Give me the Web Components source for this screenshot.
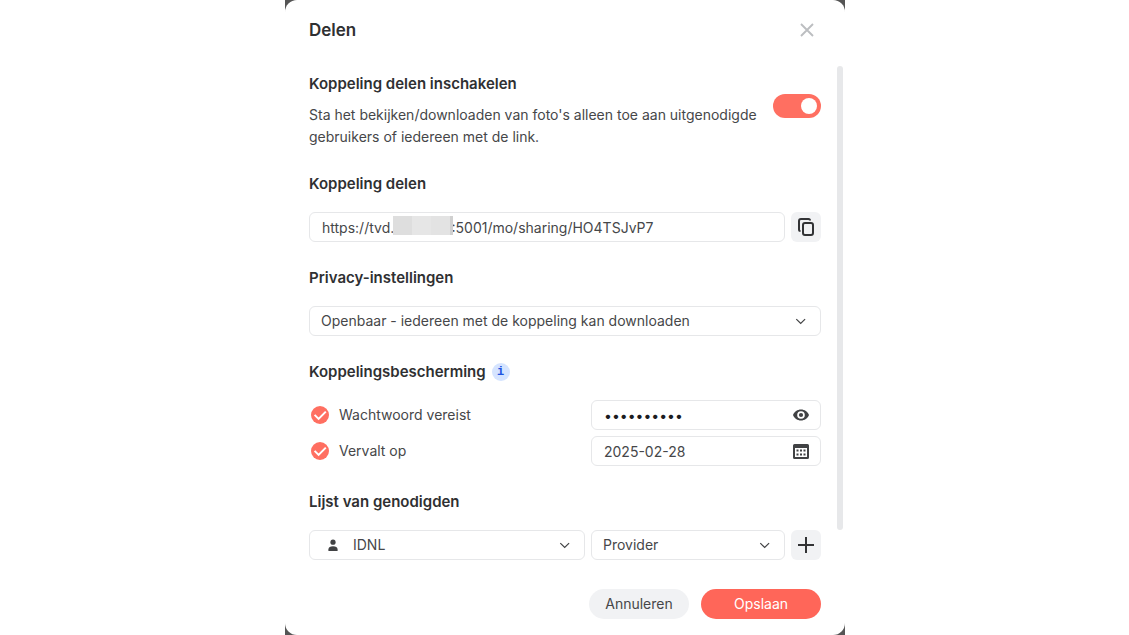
<!DOCTYPE html>
<html lang="nl">
<head>
<meta charset="utf-8">
<meta name="viewport" content="width=device-width, initial-scale=1">
<title>Delen</title>
<style>
  body { margin: 0; background: #fff; font: 400 14px/22px Inter, "Noto Sans", sans-serif; color: #464749; }
</style>
</head>
<body>
<share-page></share-page>

<script>
const define = (name, html, setup) => customElements.define(name, class extends HTMLElement {
  connectedCallback() {
    if (this.shadowRoot) return;
    const t = document.createElement('template');
    t.innerHTML = html;
    this.attachShadow({ mode: 'open' }).append(t.content.cloneNode(true));
    if (setup) setup(this, this.shadowRoot);
  }
});

/* Section heading with its content below */
define('form-section', `
<style>
  :host { display: block; }
  header { display: flex; align-items: center; gap: 6px; margin-bottom: 18px; }
  h2 { margin: 0; font-size: 15px; line-height: 20px; font-weight: 600; color: #2f3032; }
</style>
<section><header><h2></h2><slot name="hint"></slot></header><slot></slot></section>`,
(host, root) => { root.querySelector('h2').textContent = host.getAttribute('heading'); });

define('info-hint', `
<style>
  :host { display: block; height: 18px; }
  button { display: block; box-sizing: border-box; width: 18px; height: 18px; padding: 1px 0 0; border: 0; border-radius: 50%;
    background: #d5e4ff; color: #1f55e0; font: bold 12px/17px "Liberation Mono", monospace; }
</style>
<button type="button" aria-label="Informatie">i</button>`);

define('toggle-switch', `
<style>
  :host { display: block; }
  input { appearance: none; display: flex; justify-content: flex-end; box-sizing: border-box; width: 48px; height: 24px;
    margin: 0; padding: 4px; border-radius: 12px; background: #ff6f61; }
  input::before { content: ""; width: 16px; height: 16px; border-radius: 50%; background: #fff; }
  input:not(:checked) { justify-content: flex-start; background: #c6c8cc; }
</style>
<input type="checkbox" role="switch" checked aria-label="Koppeling delen inschakelen">`);

define('check-option', `
<style>
  :host { display: block; }
  label { display: flex; align-items: center; gap: 10px; padding-left: 2px; }
  .box { display: grid; width: 18px; height: 18px; }
  .box > * { grid-area: 1 / 1; }
  input { appearance: none; width: 18px; height: 18px; margin: 0; border-radius: 50%; border: 1px solid #c6c8cc; }
  input:checked { background: #ff6f61; border: 0; }
  svg { visibility: hidden; pointer-events: none; }
  input:checked + svg { visibility: visible; }
</style>
<label><span class="box"><input type="checkbox" checked>
<svg width="18" height="18" viewBox="0 0 18 18" fill="none" stroke="#fff" stroke-width="2"><path d="M3.600 8.900l4 4 7.200-7.300"/></svg></span><slot></slot></label>`);

/* Bordered text box with an optional trailing icon */
define('text-field', `
<style>
  :host { display: block; }
  .field { display: flex; align-items: center; box-sizing: border-box; height: 30px; position: relative;
    padding: 0 11px 0 12px; border: 1px solid #e6e7e9; border-radius: 6px; background: #fff; }
  input { flex: 1; min-width: 0; height: 28px; padding: 1px 0 0; border: 0; outline: 0; background: none;
    box-sizing: border-box; color: inherit; font: inherit; }
  input[type=password] { color: #1c1d1f; }
</style>
<div class="field"><input><slot></slot></div>`,
(host, root) => {
  const input = root.querySelector('input');
  input.type = host.getAttribute('type') || 'text';
  input.value = host.getAttribute('value');
  input.setAttribute('aria-label', host.getAttribute('label'));
});

define('redacted-block', `
<style>
  :host { display: block; position: absolute; left: 83px; top: 3px; width: 60px; height: 19px;
    background: linear-gradient(90deg, #dedede 19px, #e6e6e6 19px 38px, #e3e3e3 38px 57px, #d0d0d0 57px); }
</style>`);

define('select-field', `
<style>
  :host { display: block; min-width: 0; }
  .field { display: grid; grid-template-columns: 1fr auto; align-items: center; }
  select { grid-area: 1 / 1 / 2 / 3; appearance: none; box-sizing: border-box; width: 100%; height: 30px; margin: 0;
    padding: 0 40px 0 11px; border: 1px solid #e6e7e9; border-radius: 6px; background: #fff; color: inherit; font: inherit; }
  :host([icon]) select { padding-left: 43px; }
  svg { pointer-events: none; z-index: 1; }
  .chevron { grid-area: 1 / 2; margin-right: 14px; }
  .person { grid-area: 1 / 1; margin-left: 18px; display: none; }
  :host([icon]) .person { display: block; }
</style>
<div class="field"><select><option></option></select>
<svg class="person" width="12" height="12" viewBox="0 0 12 12" fill="#414244"><circle cx="6" cy="3.200" r="2.600"/><path d="M1.400 12v-1.500C1.400 8.200 3.300 7.200 6 7.200s4.600 1 4.600 3.300V12z"/></svg>
<svg class="chevron" width="12" height="12" viewBox="0 0 12 12" fill="none" stroke="#414244" stroke-width="1.200"><path d="M1.300 4.100L5.700 8.500l4.400-4.400"/></svg></div>`,
(host, root) => {
  root.querySelector('option').textContent = host.getAttribute('value');
  root.querySelector('select').setAttribute('aria-label', host.getAttribute('label'));
});

define('icon-button', `
<style>
  :host { display: block; }
  button { display: grid; place-items: center; width: 30px; height: 30px; padding: 0; border: 0; border-radius: 6px;
    background: #f1f2f4; color: #323335; }
  :host([plain]) button { width: 16px; height: 28px; background: none; color: #414244; }
  :host([close]) button { width: 28px; height: 28px; background: none; color: #bcbec1; }
</style>
<button type="button"><slot></slot></button>`,
(host, root) => { root.querySelector('button').setAttribute('aria-label', host.getAttribute('label')); });

define('pill-button', `
<style>
  :host { display: block; }
  button { display: block; width: 100px; height: 30px; padding: 0; border: 0; border-radius: 15px;
    background: #f1f2f4; color: inherit; font: inherit; }
  :host([primary]) button { width: 120px; background: #ff6659; color: #fff; }
</style>
<button type="button"><slot></slot></button>`);

define('share-dialog', `
<style>
  :host { display: block; background: #555; }
  .dialog { background: #fff; border-radius: 12px; }
  .top { display: flex; justify-content: space-between; align-items: center; padding: 16px 24px 22px; }
  h1 { margin: 0; font-size: 17px; line-height: 24px; font-weight: 600; color: #2f3032; }
  .body { display: grid; grid-template-columns: 1fr 6px; gap: 16px; padding: 0 2px 0 24px; }
  .track { height: 464px; border-radius: 3px; background: #e7e8ea; }
  .content { display: grid; gap: 26px; padding-top: 8px; min-width: 0; }
  footer { display: flex; justify-content: flex-end; gap: 12px; padding: 29px 24px 16px; }
</style>
<div class="dialog" role="dialog" aria-label="Delen">
  <div class="top"><h1>Delen</h1><slot name="close"></slot></div>
  <div class="body"><div class="content"><slot></slot></div><div class="track"></div></div>
  <footer><slot name="actions"></slot></footer>
</div>`);

define('share-page', `
<style>
  :host { display: block; padding-left: 1px; }
  share-dialog { max-width: 560px; margin: 0 auto; }
  .enable { display: flex; align-items: flex-start; justify-content: space-between; gap: 16px; }
  .enable h2 { margin: 0 0 10px; font-size: 15px; line-height: 20px; font-weight: 600; color: #2f3032; }
  .enable p { margin: 0; }
  .enable toggle-switch { margin-top: 20px; }
  .row { display: grid; gap: 6px; align-items: center; }
  .link { grid-template-columns: 1fr 30px; }
  .protect { grid-template-columns: 1fr 230px; }
  .invite { grid-template-columns: 1fr 194px 30px; }
</style>
<share-dialog>
  <icon-button slot="close" close label="Sluiten"><svg width="14" height="14" viewBox="0 0 14 14" stroke="currentColor" stroke-width="1.900" fill="none"><path d="M1 1l12 12M13 1L1 13"/></svg></icon-button>
  <section class="enable">
    <div><h2>Koppeling delen inschakelen</h2>
    <p>Sta het bekijken/downloaden van foto's alleen toe aan uitgenodigde gebruikers of iedereen met de link.</p></div>
    <toggle-switch></toggle-switch>
  </section>
  <form-section heading="Koppeling delen">
    <div class="row link">
      <text-field label="Koppeling delen" value="https://tvd.&emsp;&emsp;&emsp;&emsp;&hairsp;:5001/mo/sharing/HO4TSJvP7"><redacted-block></redacted-block></text-field>
      <icon-button label="Kopiëren"><svg width="16" height="18" viewBox="0 0 16 18" fill="none" stroke="currentColor" stroke-width="2"><path d="M2.500 13A1.500 1.500 0 0 1 1 11.500V3a2 2 0 0 1 2-2h7.500A1.500 1.500 0 0 1 12 2.500"/><rect x="5" y="5" width="10" height="12" rx="2"/></svg></icon-button>
    </div>
  </form-section>
  <form-section heading="Privacy-instellingen">
    <select-field label="Privacy-instellingen" value="Openbaar - iedereen met de koppeling kan downloaden"></select-field>
  </form-section>
  <form-section heading="Koppelingsbescherming">
    <info-hint slot="hint"></info-hint>
    <div class="row protect">
      <check-option>Wachtwoord vereist</check-option>
      <text-field type="password" label="Wachtwoord" value="wachtwoord"><icon-button plain label="Wachtwoord tonen"><svg width="16" height="12" viewBox="0 0 16 12"><path fill="currentColor" fill-rule="evenodd" d="M8 .5C4.400.500 1.300 2.700 0 6c1.300 3.300 4.400 5.500 8 5.500s6.700-2.200 8-5.500C14.700 2.700 11.600.5 8 .5zM8 2.200a3.800 3.800 0 1 1 0 7.600 3.800 3.800 0 0 1 0-7.600z"/><circle cx="8" cy="6" r="2.100" fill="currentColor"/></svg></icon-button></text-field>
      <check-option>Vervalt op</check-option>
      <text-field label="Vervaldatum" value="2025-02-28"><icon-button plain label="Kalender openen"><svg width="16" height="16" viewBox="0 0 16 16" fill="currentColor"><path fill-rule="evenodd" d="M1.500 1h13A1.500 1.500 0 0 1 16 2.500v12a1.500 1.500 0 0 1-1.500 1.500h-13A1.500 1.500 0 0 1 0 14.500v-12A1.500 1.500 0 0 1 1.500 1zM2 5v9h12V5z"/><path d="M3.500 6.500h2v2h-2zM7 6.500h2v2H7zM10.500 6.500h2v2h-2zM3.500 10.500h2v2h-2zM7 10.500h2v2H7zM10.500 10.500h2v2h-2z"/></svg></icon-button></text-field>
    </div>
  </form-section>
  <form-section heading="Lijst van genodigden">
    <div class="row invite">
      <select-field icon label="Genodigde" value="IDNL"></select-field>
      <select-field label="Rol" value="Provider"></select-field>
      <icon-button label="Toevoegen"><svg width="16" height="16" viewBox="0 0 16 16" stroke="currentColor" stroke-width="2"><path d="M8 0v16M0 8h16"/></svg></icon-button>
    </div>
  </form-section>
  <pill-button slot="actions">Annuleren</pill-button>
  <pill-button slot="actions" primary>Opslaan</pill-button>
</share-dialog>`);
</script>
</body>
</html>
